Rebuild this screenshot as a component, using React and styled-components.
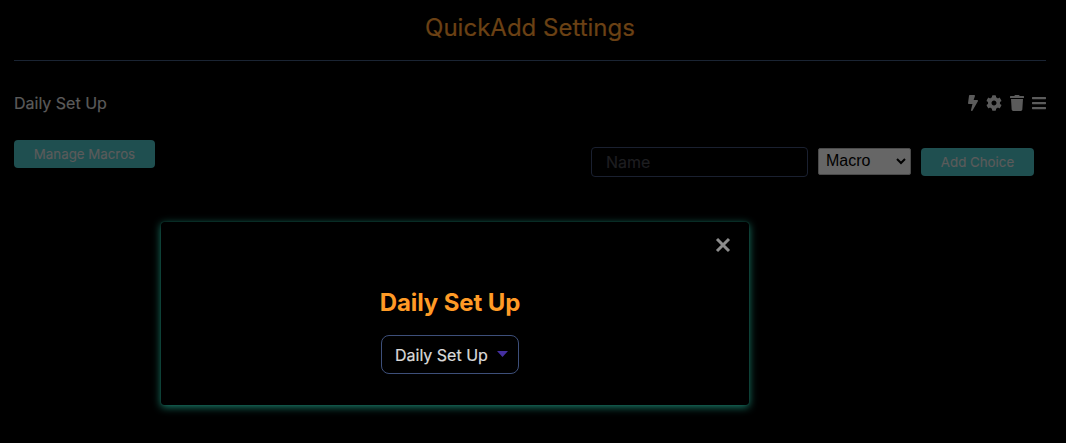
import React from "react";
import styled, { createGlobalStyle } from "styled-components";
import { FaBolt, FaCog, FaTrash, FaBars } from "react-icons/fa";

const GlobalStyle = createGlobalStyle`
  *, *::before, *::after { box-sizing: border-box; }
  body {
    margin: 0;
    background: #000;
    color: #5b5b5b;
    font-family: Inter, "Liberation Sans", sans-serif;
    font-size: 16px;
    -webkit-text-stroke: 0.2px currentColor;
  }
`;

const Page = styled.main`
  position: relative;
  height: 443px;
  overflow: hidden;
  padding: 0 20px 0 14px;
`;

const PageTitle = styled.h2`
  margin: 0;
  height: 61px;
  padding: 13px 0 0 0;
  border-bottom: 1px solid #1a2433;
  color: #6b4114;
  font-size: 24px;
  font-weight: 400;
  line-height: 30px;
  text-align: center;
`;

const ChoiceRow = styled.div`
  display: flex;
  align-items: center;
  justify-content: space-between;
  height: 24px;
  margin-top: 30px;
`;

const RowActions = styled.div`
  display: flex;
  align-items: center;
  gap: 8px;
  height: 24px;
`;

const ActionIcon = styled.span`
  display: flex;
  width: ${(p) => p.$width}px;
  height: 16px;

  svg { width: 100%; height: 100%; }
`;

const Controls = styled.div`
  display: flex;
  align-items: flex-start;
  justify-content: space-between;
  margin-top: 25px;
  padding-right: 12px;
`;

const AddForm = styled.div`
  display: flex;
  align-items: center;
  gap: 10px;
  margin-top: 7px;
`;

const Button = styled.button`
  width: ${(p) => p.$width}px;
  height: 28px;
  padding: 0;
  border: 0;
  border-radius: 4px;
  background: #1f4f50;
  color: #5b5b5b;
  font: 400 13.3px/28px Inter, sans-serif;
`;

const NameInput = styled.input`
  width: 217px;
  height: 30px;
  padding: 0 14px;
  border: 1px solid #1a2030;
  border-radius: 4px;
  background: #000;
  font: 400 16px Inter, sans-serif;
  outline: none;

  &::placeholder { color: #1e1e20; opacity: 1; }
`;

const TypeSelect = styled.div`
  display: flex;
  align-items: center;
  justify-content: space-between;
  width: 93px;
  height: 27px;
  margin-bottom: 2px;
  padding: 0 4px 0 7px;
  border: 1px solid #4a4a4a;
  border-radius: 2px;
  background: #666;
  color: #000;
  font: 400 16px/24px "Liberation Sans", Arial, sans-serif;
  -webkit-text-stroke: 0;
`;

const Modal = styled.section`
  position: absolute;
  left: 161px;
  top: 222px;
  width: 588px;
  height: 183px;
  display: flex;
  flex-direction: column;
  align-items: center;
  padding: 66px 10px 0 0;
  border-radius: 3px;
  background: #000;
  box-shadow: 0 2px 8px #1b7f6c, 0 0 1px #1b7f6c;
`;

const CloseButton = styled.button`
  position: absolute;
  right: 18px;
  top: 15px;
  padding: 0;
  border: 0;
  background: none;
  line-height: 0;
`;

const ModalTitle = styled.h2`
  margin: 0;
  color: #ff9b26;
  font-size: 24px;
  font-weight: 700;
  line-height: 30px;
  letter-spacing: -0.1px;
  -webkit-text-stroke: 0;
`;

const MacroSelect = styled.div`
  display: flex;
  align-items: center;
  justify-content: space-between;
  width: 138px;
  height: 39px;
  margin-top: 17px;
  padding: 0 10px 0 13px;
  border: 1px solid #3d4f7a;
  border-radius: 8px;
  color: #dadada;
  font-size: 16px;

  svg { margin-bottom: 2px; }
`;

export default function App() {
  return (
    <>
      <GlobalStyle />
      <Page>
        <PageTitle>QuickAdd Settings</PageTitle>
        <ChoiceRow>
          <span>Daily Set Up</span>
          <RowActions>
            <ActionIcon $width={10}><FaBolt /></ActionIcon>
            <ActionIcon $width={16}><FaCog /></ActionIcon>
            <ActionIcon $width={14}><FaTrash /></ActionIcon>
            <ActionIcon $width={14}><FaBars /></ActionIcon>
          </RowActions>
        </ChoiceRow>
        <Controls>
          <Button $width={141}>Manage Macros</Button>
          <AddForm>
            <NameInput placeholder="Name" />
            <TypeSelect>
              Macro
              <svg width="10" height="7" viewBox="0 0 10 7" fill="none" stroke="#000" strokeWidth="2">
                <path d="M1 1l4 4 4-4" />
              </svg>
            </TypeSelect>
            <Button $width={113}>Add Choice</Button>
          </AddForm>
        </Controls>
        <Modal>
          <CloseButton aria-label="Close">
            <svg width="16" height="16" viewBox="0 0 16 16" stroke="#8c8c8c" strokeWidth="3">
              <path d="M2 2l12 12M14 2L2 14" />
            </svg>
          </CloseButton>
          <ModalTitle>Daily Set Up</ModalTitle>
          <MacroSelect>
            Daily Set Up
            <svg width="11" height="6" viewBox="0 0 11 6" fill="#452fa0">
              <path d="M0 0h11L5.500 6z" />
            </svg>
          </MacroSelect>
        </Modal>
      </Page>
    </>
  );
}
